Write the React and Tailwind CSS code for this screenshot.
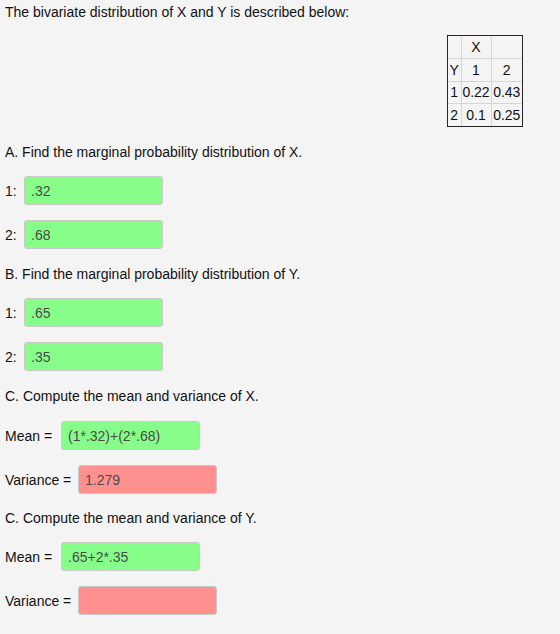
import React from 'react';

const font = { fontFamily: '"Liberation Sans", Arial, Helvetica, sans-serif' };

function Field({ label, value, ok, labelWidth }) {
  return (
    <div className="flex items-center h-[29px]">
      <span className={`${labelWidth} shrink-0`}>{label}</span>
      <input
        readOnly
        value={value}
        className={`w-[139px] h-[29px] rounded-[3px] border border-[#c9c9c9] px-[6px] text-[14px] text-[#4a4a4a] outline-none ${ok ? 'bg-[#88fe8a]' : 'bg-[#fe9090]'}`}
        style={font}
      />
    </div>
  );
}

function Table() {
  const cell = 'border border-[#d6d6d6] text-center p-0';
  return (
    <div className="border border-[#262626]">
      <table className="border-collapse border-hidden text-[14px] leading-[16px]">
        <tbody>
          <tr className="h-[22px]">
            <td className={`${cell} w-[13px]`}></td>
            <td className={`${cell} w-[30px]`}>X</td>
            <td className={`${cell} w-[31px]`}></td>
          </tr>
          <tr className="h-[23px]">
            <td className={cell}>Y</td>
            <td className={cell}>1</td>
            <td className={cell}>2</td>
          </tr>
          <tr className="h-[22px]">
            <td className={cell}>1</td>
            <td className={cell}>0.22</td>
            <td className={cell}>0.43</td>
          </tr>
          <tr className="h-[23px]">
            <td className={cell}>2</td>
            <td className={cell}>0.1</td>
            <td className={cell}>0.25</td>
          </tr>
        </tbody>
      </table>
    </div>
  );
}

export default function App() {
  return (
    <div
      className="min-h-[634px] bg-[#f4f4f4] text-[14px] leading-[16px] text-[#111] pl-[5px] pt-[4px]"
      style={font}
    >
      <p>The bivariate distribution of X and Y is described below:</p>

      <div className="flex justify-end pr-[37px] mt-[15px]">
        <Table />
      </div>

      <p className="mt-[17px]">A. Find the marginal probability distribution of X.</p>
      <div className="mt-[16px] flex flex-col gap-[15px]">
        <Field label="1:" value=".32" ok labelWidth="w-[19px]" />
        <Field label="2:" value=".68" ok labelWidth="w-[19px]" />
      </div>

      <p className="mt-[17px]">B. Find the marginal probability distribution of Y.</p>
      <div className="mt-[16px] flex flex-col gap-[15px]">
        <Field label="1:" value=".65" ok labelWidth="w-[19px]" />
        <Field label="2:" value=".35" ok labelWidth="w-[19px]" />
      </div>

      <p className="mt-[17px]">C. Compute the mean and variance of X.</p>
      <div className="mt-[17px] flex flex-col gap-[15px]">
        <Field label="Mean =" value="(1*.32)+(2*.68)" ok labelWidth="w-[56px]" />
        <Field label="Variance =" value="1.279" labelWidth="w-[73px]" />
      </div>

      <p className="mt-[16px]">C. Compute the mean and variance of Y.</p>
      <div className="mt-[16px] flex flex-col gap-[15px]">
        <Field label="Mean =" value=".65+2*.35" ok labelWidth="w-[56px]" />
        <Field label="Variance =" value="" labelWidth="w-[73px]" />
      </div>
    </div>
  );
}
